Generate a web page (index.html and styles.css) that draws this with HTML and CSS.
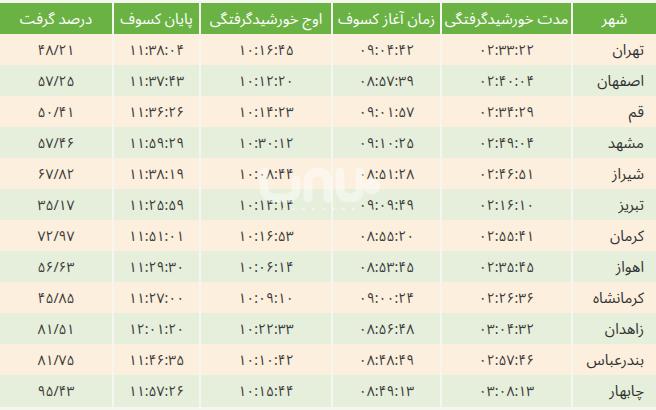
FILE: index.html
```html
<!DOCTYPE html>
<html lang="fa" dir="rtl">
<head>
<meta charset="utf-8">
<link rel="stylesheet" href="styles.css">
</head>
<body>
<div class="sheet">
  <div class="row head">
    <div class="cell">شهر</div>
    <div class="cell">مدت خورشیدگرفتگی</div>
    <div class="cell">زمان آغاز کسوف</div>
    <div class="cell">اوج خورشیدگرفتگی</div>
    <div class="cell">پایان کسوف</div>
    <div class="cell">درصد گرفت</div>
  </div>
  <div class="row peach"><div class="cell city">تهران</div><div class="cell">۰۲:۳۳:۲۲</div><div class="cell">۰۹:۰۴:۴۲</div><div class="cell">۱۰:۱۶:۴۵</div><div class="cell">۱۱:۳۸:۰۴</div><div class="cell">۴۸/۲۱</div></div>
  <div class="row green"><div class="cell city">اصفهان</div><div class="cell">۰۲:۴۰:۰۴</div><div class="cell">۰۸:۵۷:۳۹</div><div class="cell">۱۰:۱۲:۲۰</div><div class="cell">۱۱:۳۷:۴۳</div><div class="cell">۵۷/۲۵</div></div>
  <div class="row peach"><div class="cell city">قم</div><div class="cell">۰۲:۳۴:۲۹</div><div class="cell">۰۹:۰۱:۵۷</div><div class="cell">۱۰:۱۴:۲۳</div><div class="cell">۱۱:۳۶:۲۶</div><div class="cell">۵۰/۴۱</div></div>
  <div class="row green"><div class="cell city">مشهد</div><div class="cell">۰۲:۴۹:۰۴</div><div class="cell">۰۹:۱۰:۲۵</div><div class="cell">۱۰:۳۰:۱۲</div><div class="cell">۱۱:۵۹:۲۹</div><div class="cell">۵۷/۴۶</div></div>
  <div class="row peach"><div class="cell city">شیراز</div><div class="cell">۰۲:۴۶:۵۱</div><div class="cell">۰۸:۵۱:۲۸</div><div class="cell">۱۰:۰۸:۴۴</div><div class="cell">۱۱:۳۸:۱۹</div><div class="cell">۶۷/۸۲</div></div>
  <div class="row green"><div class="cell city">تبریز</div><div class="cell">۰۲:۱۶:۱۰</div><div class="cell">۰۹:۰۹:۴۹</div><div class="cell">۱۰:۱۴:۱۴</div><div class="cell">۱۱:۲۵:۵۹</div><div class="cell">۳۵/۱۷</div></div>
  <div class="row peach"><div class="cell city">کرمان</div><div class="cell">۰۲:۵۵:۴۱</div><div class="cell">۰۸:۵۵:۲۰</div><div class="cell">۱۰:۱۶:۵۳</div><div class="cell">۱۱:۵۱:۰۱</div><div class="cell">۷۲/۹۷</div></div>
  <div class="row green"><div class="cell city">اهواز</div><div class="cell">۰۲:۳۵:۴۵</div><div class="cell">۰۸:۵۳:۴۵</div><div class="cell">۱۰:۰۶:۱۴</div><div class="cell">۱۱:۲۹:۳۰</div><div class="cell">۵۶/۶۳</div></div>
  <div class="row peach"><div class="cell city">کرمانشاه</div><div class="cell">۰۲:۲۶:۳۶</div><div class="cell">۰۹:۰۰:۲۴</div><div class="cell">۱۰:۰۹:۱۰</div><div class="cell">۱۱:۲۷:۰۰</div><div class="cell">۴۵/۸۵</div></div>
  <div class="row green"><div class="cell city">زاهدان</div><div class="cell">۰۳:۰۴:۳۲</div><div class="cell">۰۸:۵۶:۴۸</div><div class="cell">۱۰:۲۲:۳۳</div><div class="cell">۱۲:۰۱:۲۰</div><div class="cell">۸۱/۵۱</div></div>
  <div class="row peach"><div class="cell city">بندرعباس</div><div class="cell">۰۲:۵۷:۴۶</div><div class="cell">۰۸:۴۸:۴۹</div><div class="cell">۱۰:۱۰:۴۲</div><div class="cell">۱۱:۴۶:۳۵</div><div class="cell">۸۱/۷۵</div></div>
  <div class="row green"><div class="cell city">چابهار</div><div class="cell">۰۳:۰۸:۱۳</div><div class="cell">۰۸:۴۹:۱۳</div><div class="cell">۱۰:۱۵:۴۴</div><div class="cell">۱۱:۵۷:۲۶</div><div class="cell">۹۵/۴۳</div></div>
  <svg class="mark" width="130" height="60" viewBox="0 0 130 60" aria-hidden="true">
    <g fill="none" stroke="#ffffff" stroke-width="9" stroke-linecap="round" stroke-linejoin="round" opacity="0.45">
      <path d="M12 14 V30 Q12 40 24 40 H34 Q44 40 44 30 V22"/>
      <path d="M56 40 V24 Q56 14 66 14 Q76 14 76 24 V40"/>
      <path d="M88 14 V30 Q88 40 98 40 Q108 40 108 30 V14"/>
      <circle cx="120" cy="28" r="4"/>
    </g>
    <g fill="#ffffff" opacity="0.45">
      <rect x="30" y="50" width="3" height="2"/><rect x="40" y="50" width="3" height="2"/><rect x="50" y="50" width="3" height="2"/><rect x="60" y="50" width="3" height="2"/><rect x="70" y="50" width="3" height="2"/><rect x="80" y="50" width="3" height="2"/><rect x="90" y="50" width="3" height="2"/><rect x="100" y="50" width="3" height="2"/>
    </g>
  </svg>
</div>
</body>
</html>
```

FILE: styles.css
```css
html, body {
  margin: 0;
  padding: 0;
  background: #f6f6f1;
}
body {
  width: 656px;
  height: 410px;
  overflow: hidden;
  font-family: "Noto Sans Arabic", "Noto Naskh Arabic", "Vazirmatn", "DejaVu Sans", sans-serif;
}
.sheet {
  position: relative;
  display: flex;
  flex-direction: column;
  gap: 2px;
  padding-top: 3px;
}
.row {
  display: grid;
  grid-template-columns: 83px 129px 107px 130px 85px 112px;
  column-gap: 2px;
  height: 29px;
}
.cell {
  display: flex;
  align-items: center;
  justify-content: center;
  font-size: 14px;
  color: #3a3a3a;
  white-space: nowrap;
}
.head .cell {
  background: #6ab243;
  color: #ffffff;
  font-size: 15px;
}
.peach .cell {
  background: #fcefdd;
}
.green .cell {
  background: #e6efdc;
}
.cell.city {
  justify-content: flex-start;
  padding-right: 12px;
  font-size: 15px;
  color: #333;
}
.mark {
  position: absolute;
  left: 252px;
  top: 158px;
}
```
